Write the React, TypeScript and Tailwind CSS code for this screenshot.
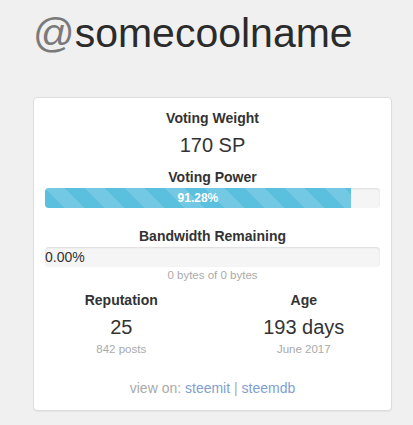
import React, { FC } from "react";

interface Stat {
  label: string;
  value: string;
  sub: string;
}

const stats: Stat[] = [
  { label: "Reputation", value: "25", sub: "842 posts" },
  { label: "Age", value: "193 days", sub: "June 2017" },
];

const stripes =
  "bg-[linear-gradient(45deg,rgba(255,255,255,0.15)_25%,transparent_25%,transparent_50%,rgba(255,255,255,0.15)_50%,rgba(255,255,255,0.15)_75%,transparent_75%,transparent)] bg-[length:40px_40px]";

const App: FC = () => {
  const votingPower = 91.28;

  return (
    <div
      className="min-h-[425px] w-[413px] bg-[#f0f0f0] pl-[33px] pt-[13px] text-[#333]"
      style={{ fontFamily: '"Liberation Sans", Arial, sans-serif' }}
    >
      <h1 className="text-[41px] leading-[41px] text-[#2b2b2b]">
        <span className="text-[#7a7a7a]">@</span>somecoolname
      </h1>

      <div className="mt-[43px] w-[359px] rounded-[4px] border border-[#ddd] bg-white px-[11px] pb-[12px] pt-[10px] shadow-[0_1px_1px_rgba(0,0,0,0.05)]">
        <div className="flex flex-col items-center">
          <div className="text-[14px] leading-[20px] font-semibold">Voting Weight</div>
          <div className="mt-[3px] text-[20px] leading-[28px]">170 SP</div>
          <div className="mt-[8px] text-[14px] leading-[20px] font-semibold">Voting Power</div>
        </div>

        <div className="mt-[1px] h-[20px] w-full overflow-hidden rounded-[4px] bg-[#f5f5f5] shadow-[inset_0_1px_2px_rgba(0,0,0,0.1)]">
          <div
            className={`h-full bg-[#5bc0de] text-center text-[12px] leading-[20px] font-bold text-white ${stripes}`}
            style={{ width: `${votingPower}%` }}
          >
            {votingPower.toFixed(2)}%
          </div>
        </div>

        <div className="mt-[18px] text-center text-[14px] leading-[20px] font-semibold">
          Bandwidth Remaining
        </div>
        <div className="mt-[1px] h-[20px] w-full overflow-hidden rounded-[4px] bg-[#f5f5f5] shadow-[inset_0_1px_2px_rgba(0,0,0,0.1)]">
          <div className="whitespace-nowrap text-[14px] leading-[20px] text-[#333]">0.00%</div>
        </div>
        <div className="text-center text-[11.5px] leading-[16px] text-[#aaa]">0 bytes of 0 bytes</div>

        <div className="mx-[-15px] mt-[7px] grid grid-cols-2">
          {stats.map((s) => (
            <div key={s.label} className="flex flex-col items-center">
              <div className="text-[14px] leading-[20px] font-semibold">{s.label}</div>
              <div className="mt-[3px] text-[20px] leading-[28px]">{s.value}</div>
              <div className="text-[11.5px] leading-[16px] text-[#aaa]">{s.sub}</div>
            </div>
          ))}
        </div>

        <div className="mt-[21px] text-center text-[14px] leading-[20px] text-[#aaa]">
          view on: <a className="text-[#7fa0d2]">steemit</a> |{" "}
          <a className="text-[#7fa0d2]">steemdb</a>
        </div>
      </div>
    </div>
  );
};

export default App;
